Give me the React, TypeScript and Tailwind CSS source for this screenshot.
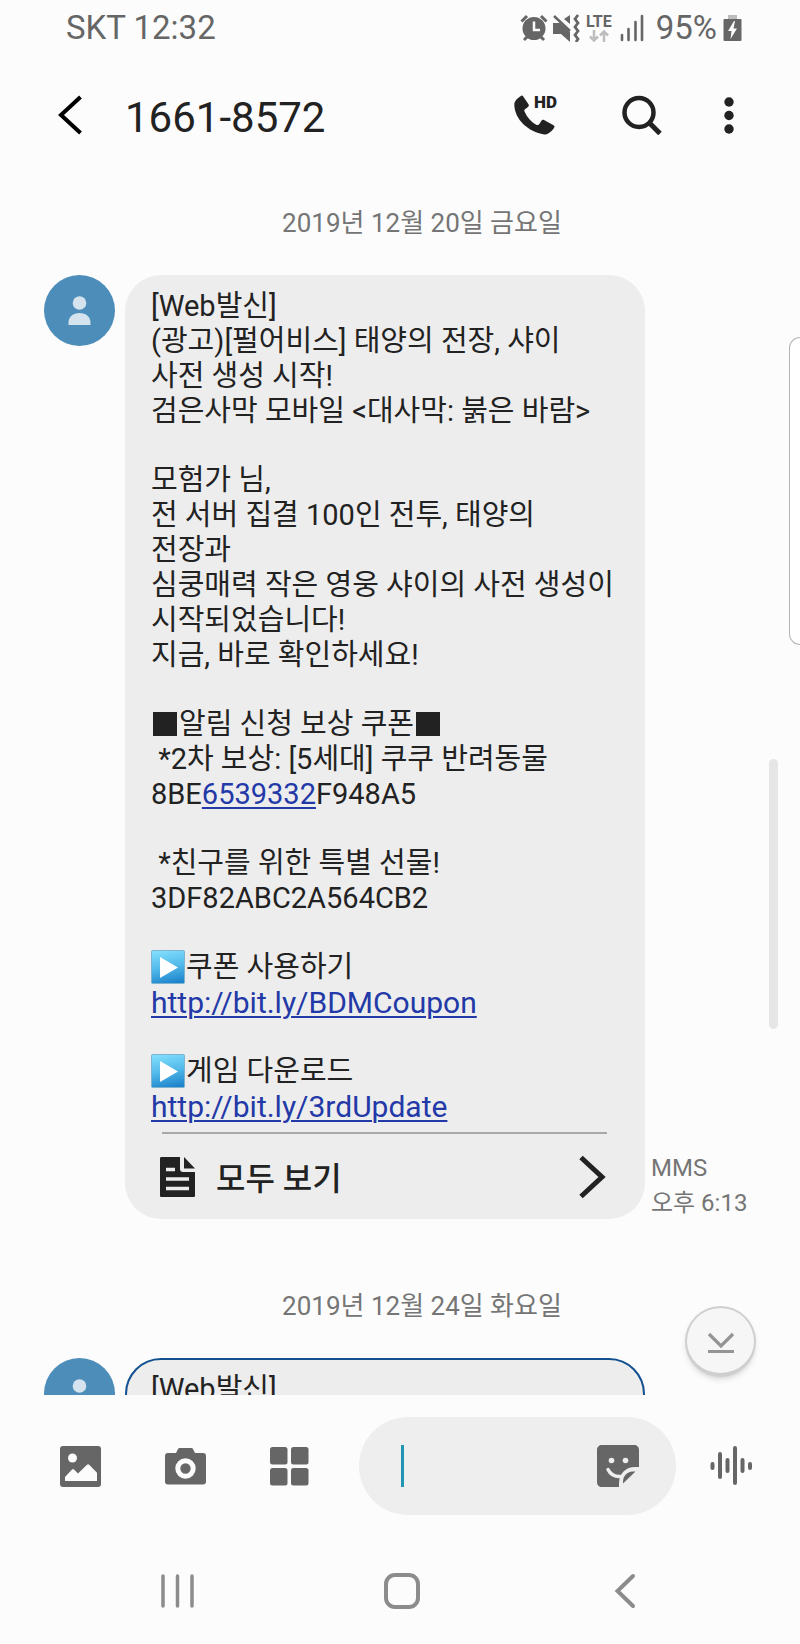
import type { ReactNode } from "react"

const couponLines: ReactNode[][] = [
  [
    "[Web발신]",
    "(광고)[펄어비스] 태양의 전장, 샤이",
    "사전 생성 시작!",
    "검은사막 모바일 <대사막: 붉은 바람>",
  ],
  [
    "모험가 님,",
    "전 서버 집결 100인 전투, 태양의",
    "전장과",
    "심쿵매력 작은 영웅 샤이의 사전 생성이",
    "시작되었습니다!",
    "지금, 바로 확인하세요!",
  ],
  [
    <><BlackSquare />알림 신청 보상 쿠폰<BlackSquare /></>,
    " *2차 보상: [5세대] 쿠쿠 반려동물",
    <>8BE<TextLink href="tel:6539332">6539332</TextLink>F948A5</>,
  ],
  [" *친구를 위한 특별 선물!", "3DF82ABC2A564CB2"],
  [
    <><PlayEmoji id="coupon" />쿠폰 사용하기</>,
    <span className="text-[30px]"><TextLink href="http://bit.ly/BDMCoupon">http://bit.ly/BDMCoupon</TextLink></span>,
  ],
  [
    <><PlayEmoji id="download" />게임 다운로드</>,
    <span className="text-[30px]"><TextLink href="http://bit.ly/3rdUpdate">http://bit.ly/3rdUpdate</TextLink></span>,
  ],
]

function TextLink({ href, children }: { href: string; children: ReactNode }) {
  return (
    <a href={href} className="text-[#2339a8] underline decoration-2 underline-offset-3">
      {children}
    </a>
  )
}

function BlackSquare() {
  return <span className="mx-0.5 inline-block size-6 bg-[#222] align-[-2px]" />
}

function PlayEmoji({ id }: { id: string }) {
  return (
    <svg viewBox="0 0 34 34" className="mr-px inline-block h-[34px] w-[34px] align-[-7px]" aria-hidden="true">
      <defs>
        <linearGradient id={id} x1="0.4" y1="0" x2="0.6" y2="1">
          <stop offset="0" stopColor="#7fdcfb" />
          <stop offset="0.5" stopColor="#52b9ea" />
          <stop offset="1" stopColor="#1f84cc" />
        </linearGradient>
      </defs>
      <rect x="0.5" y="0.5" width="33" height="33" rx="1" fill={`url(#${id})`} stroke="#7fb3cf" />
      <path d="M9 7v21l18-10.500z" fill="#fff" />
    </svg>
  )
}

function Avatar() {
  return (
    <svg viewBox="0 0 71 71" className="size-[71px] shrink-0" aria-hidden="true">
      <circle cx="35.500" cy="35.500" r="35.500" fill="#4c8dba" />
      <circle cx="35.500" cy="28" r="6.800" fill="#d5e3ef" />
      <path d="M24.500 50v-2.500c0-5.500 4.500-9.500 11-9.500s11 4 11 9.500V50z" fill="#d5e3ef" />
    </svg>
  )
}

function DateLabel({ children }: { children: ReactNode }) {
  return <p className="text-center text-[26px] leading-9 text-[#757575]">{children}</p>
}

function StatusBar() {
  return (
    <div className="flex h-14 shrink-0 items-center justify-between pr-[58px] pl-[66px] text-[33px] leading-9 text-[#666]">
      <span>SKT 12:32</span>
      <div className="flex items-center">
        <svg viewBox="0 0 28 28" className="mr-1 size-7" aria-hidden="true">
          <circle cx="14" cy="14.500" r="11.500" fill="#666" />
          <path d="M1.500 7.500 7 2M26.500 7.500 21 2M4 26l4-4M24 26l-4-4" stroke="#666" strokeWidth="3" fill="none" />
          <path d="M14 7.500v8.500h6" stroke="#fcfcfc" strokeWidth="2.500" fill="none" />
        </svg>
        <svg viewBox="0 0 28 28" className="mr-1.5 size-7" aria-hidden="true">
          <path d="M1 9h7l10 9v10l-9-8H1zM12 5l6-4v9z" fill="#666" />
          <path d="M2 2l16 15" stroke="#666" strokeWidth="2.500" />
          <path d="M26 1l-3 4 3 4-3 4 3 4-3 4 3 4-2 3" stroke="#666" strokeWidth="2.800" fill="none" />
        </svg>
        <div className="mr-2 flex flex-col items-center">
          <span className="text-[16px] leading-4 font-bold">LTE</span>
          <svg viewBox="0 0 20 12" className="h-3 w-5" aria-hidden="true">
            <path d="M5 0v10M1 6.500l4 4 4-4M15 12V2M11 5.500l4-4 4 4" stroke="#bdbdbd" strokeWidth="2.500" fill="none" />
          </svg>
        </div>
        <svg viewBox="0 0 24 28" className="mr-3 h-7 w-6" aria-hidden="true">
          <path d="M2 26v-5M8.500 26V15M15.500 26V8M22 26V2" stroke="#666" strokeWidth="2.600" strokeLinecap="round" />
        </svg>
        <span className="mr-1.5">95%</span>
        <svg viewBox="0 0 19 28" className="h-7 w-[19px]" aria-hidden="true">
          <path d="M5 1h9v4H5z" fill="#bdbdbd" />
          <rect x="0.500" y="5" width="18" height="22" rx="1" fill="#666" />
          <path d="M11 7 5 17h3.500l-1 8L14 14.500h-3.500L12 7z" fill="#fcfcfc" />
        </svg>
      </div>
    </div>
  )
}

function ChatHeader() {
  return (
    <header className="flex h-[118px] shrink-0 items-center pr-[66px] pl-[58px]">
      <button aria-label="뒤로" className="mr-[43px]">
        <svg viewBox="0 0 24 40" className="h-10 w-6">
          <path d="M22.500 2 3 20l19.500 18" fill="none" stroke="#000" strokeWidth="4" />
        </svg>
      </button>
      <h1 className="flex-1 pt-1.5 text-[42px] leading-[48px] text-[#222]">1661-8572</h1>
      <button aria-label="HD 통화" className="mr-[62px]">
        <svg viewBox="0 0 46 44" className="h-11 w-[46px]">
          <path
            d="M6.500 3.200c1-1 2-.8 2.700.2l5.300 7.800c.6 1 .4 2-.5 2.700l-3 2.300c-.7.600-.9 1.200-.5 2.200 2.400 5.700 6.300 10.200 11.600 13.300 1.500.8 2.600.4 3.300-.7l2-3.300c.7-1 1.600-1.200 2.600-.6l9.500 5.200c1.100.7 1.300 1.600.5 2.700-1.600 2.200-3.600 4.400-6.200 5.800-1 .6-2.300.8-3.700.6C14.500 39 .500 26.500.300 11.500.3 8 3.500 5.200 6.500 3.200z"
            fill="#222"
          />
          <text x="20" y="15" fill="#222" fontSize="17" fontWeight="900">HD</text>
        </svg>
      </button>
      <button aria-label="검색" className="mr-[62px]">
        <svg viewBox="0 0 40 40" className="size-10">
          <circle cx="17" cy="17.500" r="14.500" fill="none" stroke="#222" strokeWidth="4.500" />
          <path d="M27 27.500 38 38.500" stroke="#222" strokeWidth="5" />
        </svg>
      </button>
      <button aria-label="더보기">
        <svg viewBox="0 0 10 40" className="h-10 w-2.5" fill="#222">
          <circle cx="5" cy="7" r="4.700" />
          <circle cx="5" cy="20.500" r="4.700" />
          <circle cx="5" cy="34" r="4.700" />
        </svg>
      </button>
    </header>
  )
}

function CouponMessage() {
  return (
    <div className="flex gap-2.5">
      <Avatar />
      <article className="w-[520px] rounded-[36px] bg-[#ededed] pt-[14px] text-[#222]">
        <div className="flex flex-col gap-[34px] pr-6 pl-[26px] text-[29px] leading-[35px]">
          {couponLines.map((lines, i) => (
            <div key={i}>
              {lines.map((line, j) => (
                <p key={j} className="h-[35px] whitespace-pre">{line}</p>
              ))}
            </div>
          ))}
        </div>
        <button className="mt-2 mr-[38px] ml-[37px] flex h-[87px] w-[445px] items-center border-t-2 border-[#a8a8a8] text-left">
          <svg viewBox="0 0 36 40" className="-ml-0.5 h-10 w-9" aria-hidden="true">
            <path d="M1.500 0H20v12c0 2 1 3 3 3h12v23.500c0 1-.5 1.500-1.500 1.500h-32C.5 40 0 39.500 0 38.500v-37C0 .5.500 0 1.500 0z" fill="#222" />
            <path d="M24 0l11 11.500H24z" fill="#222" />
            <path d="M6 12.500h9M6 22h23M6 31.500h23" stroke="#ededed" strokeWidth="3.500" />
          </svg>
          <span className="ml-5 flex-1 pt-1 text-[32px] leading-10 font-medium">모두 보기</span>
          <svg viewBox="0 0 28 44" className="h-11 w-7" aria-hidden="true">
            <path d="M2 2.500 23 22 2 41.500" fill="none" stroke="#222" strokeWidth="5" />
          </svg>
        </button>
      </article>
      <p className="-mb-0.5 -ml-1 self-end text-2xl leading-[35px] text-[#757575]">
        MMS
        <br />
        오후 6:13
      </p>
    </div>
  )
}

function Composer() {
  return (
    <form className="flex h-[142px] shrink-0 items-center pr-12 pl-[60px] text-[#666]">
      <button type="button" aria-label="갤러리" className="mr-16">
        <svg viewBox="0 0 41 41" className="size-[41px]">
          <rect width="41" height="41" rx="3" fill="#666" />
          <circle cx="12.500" cy="12" r="4.500" fill="#fcfcfc" />
          <path d="M5 35v-4l7-7.500c.700-.700 1.300-.700 2 0l4 4 9-8.700c.800-.800 1.400-.800 2.200 0l7.800 8V35z" fill="#fcfcfc" />
        </svg>
      </button>
      <button type="button" aria-label="카메라" className="mr-16">
        <svg viewBox="0 0 41 37" className="h-[37px] w-[41px]">
          <path d="M3 5h8l2-4c.400-.700.800-1 1.500-1h12c.7 0 1.100.300 1.500 1l2 4h8c2 0 3 1 3 3v25.500c0 2-1 3-3 3H3c-2 0-3-1-3-3V8c0-2 1-3 3-3z" fill="#666" />
          <circle cx="20.500" cy="20.500" r="7.700" fill="none" stroke="#fcfcfc" strokeWidth="5" />
        </svg>
      </button>
      <button type="button" aria-label="추가 항목" className="mr-[50px]">
        <svg viewBox="0 0 39 39" className="size-[39px]" fill="#666">
          <rect x="0" y="0" width="17.500" height="17.500" rx="2.500" />
          <rect x="21" y="0" width="17.500" height="17.500" rx="2.500" />
          <rect x="0" y="21" width="17.500" height="17.500" rx="2.500" />
          <rect x="21" y="21" width="17.500" height="17.500" rx="2.500" />
        </svg>
      </button>
      <div className="flex h-[98px] min-w-0 flex-1 items-center rounded-full bg-[#eee] pr-[37px] pl-[42px]">
        <span className="h-[42px] w-[3px] bg-[#2196b4]" />
        <input
          type="text"
          aria-label="메시지 입력"
          className="h-12 min-w-0 flex-1 bg-transparent text-[29px] text-[#222] outline-none"
        />
        <button type="button" aria-label="스티커">
          <svg viewBox="0 0 42 42" className="size-[42px]">
            <path d="M5 0h32c3 0 5 2 5 5v17h-4c-9 0-15.500 6-16 16V42H5c-3 0-5-2-5-5V5c0-3 2-5 5-5z" fill="#666" />
            <circle cx="14.500" cy="15.500" r="2.800" fill="#eee" />
            <circle cx="28.500" cy="15.500" r="2.800" fill="#eee" />
            <path d="M11 24.500c2.500 5 7 7.500 13 7" fill="none" stroke="#eee" strokeWidth="3.500" strokeLinecap="round" />
            <path d="M26 38.500V36c.500-5.500 4-9 9.500-9.500h3z" fill="#666" />
          </svg>
        </button>
      </div>
      <button type="button" aria-label="음성 녹음" className="ml-[34px]">
        <svg viewBox="0 0 42 42" className="size-[42px]">
          <path
            d="M2.500 19v4M10 9v23M17.500 15v11M25 3v35M32.500 15v11M40 19v4"
            stroke="#666"
            strokeWidth="4"
            strokeLinecap="round"
          />
        </svg>
      </button>
    </form>
  )
}

function NavigationBar() {
  return (
    <nav className="flex h-[107px] shrink-0 items-center justify-between pr-[164px] pl-[160px]">
      <button aria-label="최근 앱">
        <svg viewBox="0 0 36 36" className="size-9">
          <path d="M3 3v30M17.500 3v30M32 3v30" stroke="#8c8c8c" strokeWidth="3.500" strokeLinecap="round" />
        </svg>
      </button>
      <button aria-label="홈">
        <svg viewBox="0 0 36 36" className="size-9">
          <rect x="2" y="2" width="32" height="32" rx="9" fill="none" stroke="#8c8c8c" strokeWidth="4" />
        </svg>
      </button>
      <button aria-label="이전">
        <svg viewBox="0 0 28 36" className="h-9 w-7">
          <path d="M25 3 9.500 18 25 33" fill="none" stroke="#8c8c8c" strokeWidth="4" strokeLinecap="round" />
        </svg>
      </button>
    </nav>
  )
}

export default function App() {
  return (
    <div className="relative flex h-screen flex-col overflow-hidden bg-[#fcfcfc] font-[Roboto,'Noto_Sans_CJK_KR',sans-serif]">
      <StatusBar />
      <ChatHeader />

      <main className="relative min-h-0 flex-1 overflow-hidden pt-[31px] pl-11">
        <DateLabel>2019년 12월 20일 금요일</DateLabel>
        <div className="mt-[34px]">
          <CouponMessage />
        </div>
        <div className="mt-[69px]">
          <DateLabel>2019년 12월 24일 화요일</DateLabel>
        </div>
        <div className="mt-[34px] flex gap-2.5">
          <Avatar />
          <article className="h-[200px] w-[520px] rounded-[36px] border-2 border-[#13508f] bg-[#ededed] px-6 pt-3 text-[29px] leading-[35px] text-[#222]">
            [Web발신]
          </article>
        </div>

        {/* scroll thumb */}
        <div className="absolute top-[585px] right-[22px] h-[270px] w-[9px] rounded-full bg-[#e6e6e6]" />
        <button
          aria-label="맨 아래로"
          className="absolute right-11 bottom-[18px] flex size-[71px] items-center justify-center rounded-full border-2 border-b-4 border-[#cfcfcf] bg-[#f6f6f6] pt-1 shadow-md"
        >
          <svg viewBox="0 0 28 24" className="h-6 w-7">
            <path d="M2 3l12 12L26 3M1 20.500h26" fill="none" stroke="#949494" strokeWidth="3.200" />
          </svg>
        </button>
      </main>

      <Composer />
      <NavigationBar />

      {/* edge panel handle */}
      <div className="absolute top-[337px] right-0 h-[308px] w-[11px] rounded-l-xl border border-r-0 border-[#b5b5b5] bg-white" />
    </div>
  )
}
